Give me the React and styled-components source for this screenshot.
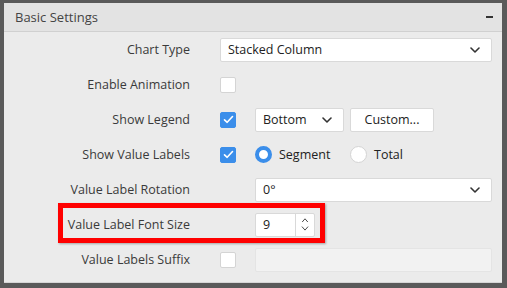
import React from 'react';
import styled, { createGlobalStyle } from 'styled-components';

const GlobalStyle = createGlobalStyle`
  html, body {
    margin: 0;
    padding: 0;
    background: #5a5a5a;
  }
  body {
    font-family: "Open Sans", "Noto Sans", sans-serif;
  }
`;

const Frame = styled.div`
  width: 507px;
  height: 288px;
  box-sizing: border-box;
  padding: 3px 5px 5px 4px;
  background: #5a5a5a;
`;

const Panel = styled.div`
  height: 100%;
  background: #ebebeb;
  display: flex;
  flex-direction: column;
  overflow: hidden;
`;

const Header = styled.div`
  height: 28px;
  flex: none;
  display: flex;
  align-items: center;
  justify-content: space-between;
  padding: 0 9px 0 11px;
  background: #e3e3e3;
  border-bottom: 1px solid #d0d0d0;
  color: #444;
  font-size: 13px;
`;

const Minus = styled.span`
  width: 7px;
  height: 2px;
  background: #333;
`;

const Body = styled.div`
  flex: 1;
  display: flex;
  flex-direction: column;
  border-bottom: 1px solid #d6d6d6;
`;

const Row = styled.div`
  height: 35px;
  flex: none;
  display: grid;
  grid-template-columns: 216px 35px 1fr;
  align-items: center;
  padding-right: 10px;
  position: relative;
`;

const Label = styled.div`
  text-align: right;
  padding-right: 30px;
  font-size: 12.5px;
  color: #3a3a3a;
  white-space: nowrap;
`;

const Controls = styled.div`
  grid-column: ${p => (p.$wide ? '2 / 4' : '3')};
  display: flex;
  align-items: center;
  gap: 6px;
`;

const Box = styled.span`
  width: 16px;
  height: 16px;
  box-sizing: border-box;
  border-radius: 2px;
  background: ${p => (p.$checked ? '#3b8eea' : '#fff')};
  border: 1px solid ${p => (p.$checked ? '#3b8eea' : '#d4d4d4')};
  display: flex;
  align-items: center;
  justify-content: center;
`;

const Select = styled.div`
  height: 24px;
  width: ${p => p.$width || 'auto'};
  flex: ${p => (p.$width ? 'none' : '1')};
  box-sizing: border-box;
  background: #fff;
  border: 1px solid #d9d9d9;
  border-radius: 2px;
  display: flex;
  align-items: center;
  justify-content: space-between;
  padding: 0 11px 0 7px;
  font-size: 12.5px;
  color: #222;
`;

const Button = styled.div`
  height: 24px;
  width: 84px;
  box-sizing: border-box;
  background: #fff;
  border: 1px solid #d9d9d9;
  border-radius: 2px;
  display: flex;
  align-items: center;
  justify-content: center;
  font-size: 12.5px;
  color: #222;
`;

const RadioItem = styled.label`
  display: flex;
  align-items: center;
  gap: 7px;
  font-size: 12.5px;
  color: #222;
  width: ${p => p.$width || 'auto'};
`;

const Radio = styled.span`
  width: 17px;
  height: 17px;
  box-sizing: border-box;
  border-radius: 50%;
  background: #fff;
  border: ${p => (p.$checked ? '4px solid #3b8eea' : '1px solid #d4d4d4')};
`;

const Highlight = styled.div`
  position: absolute;
  left: 54px;
  top: -4px;
  width: 267px;
  height: 40px;
  box-sizing: border-box;
  border: 5px solid #ff0000;
  box-shadow: 1px 1px 2px rgba(0, 0, 0, 0.3);
  pointer-events: none;
`;

const NumberBox = styled.div`
  width: 60px;
  height: 24px;
  box-sizing: border-box;
  background: #fff;
  border: 1px solid #d9d9d9;
  border-radius: 2px;
  display: flex;
  font-size: 12.5px;
  color: #222;
`;

const NumberValue = styled.span`
  flex: 1;
  display: flex;
  align-items: center;
  padding-left: 7px;
  border-right: 1px solid #d9d9d9;
`;

const Spinner = styled.span`
  width: 18px;
  display: flex;
  flex-direction: column;
  align-items: center;
  justify-content: center;
  gap: 4px;
`;

const Disabled = styled.div`
  flex: 1;
  height: 24px;
  box-sizing: border-box;
  background: #f2f2f2;
  border: 1px solid #e4e4e4;
  border-radius: 2px;
`;

const Chevron = ({ up, size = 10 }) => (
  <svg width={size} height={size * 0.6} viewBox="0 0 10 6" fill="none">
    <path
      d={up ? 'M1.5 5 L5 1 L8.5 5' : 'M1 1 L5 5 L9 1'}
      stroke="#333"
      strokeWidth={up ? 1.1 : 1.6}
      strokeLinecap="round"
      strokeLinejoin="round"
    />
  </svg>
);

const SmallDown = () => (
  <svg width="8" height="5" viewBox="0 0 10 6" fill="none">
    <path d="M1.5 1 L5 5 L8.5 1" stroke="#333" strokeWidth="1.1" strokeLinecap="round" strokeLinejoin="round" />
  </svg>
);

const Check = () => (
  <svg width="11" height="9" viewBox="0 0 11 9" fill="none">
    <path d="M1.5 4.8 L4.2 7.3 L9.5 1.5" stroke="#fff" strokeWidth="1.6" strokeLinecap="round" strokeLinejoin="round" />
  </svg>
);

export default function App() {
  return (
    <>
      <GlobalStyle />
      <Frame>
        <Panel>
          <Header>
            <span>Basic Settings</span>
            <Minus />
          </Header>
          <Body>
            <Row>
              <Label>Chart Type</Label>
              <Controls $wide>
                <Select>
                  <span>Stacked Column</span>
                  <Chevron />
                </Select>
              </Controls>
            </Row>
            <Row>
              <Label>Enable Animation</Label>
              <Box />
            </Row>
            <Row>
              <Label>Show Legend</Label>
              <Box $checked><Check /></Box>
              <Controls>
                <Select $width="89px">
                  <span>Bottom</span>
                  <Chevron />
                </Select>
                <Button>Custom...</Button>
              </Controls>
            </Row>
            <Row>
              <Label>Show Value Labels</Label>
              <Box $checked><Check /></Box>
              <Controls>
                <RadioItem $width="89px">
                  <Radio $checked />
                  Segment
                </RadioItem>
                <RadioItem>
                  <Radio />
                  Total
                </RadioItem>
              </Controls>
            </Row>
            <Row>
              <Label>Value Label Rotation</Label>
              <Controls>
                <Select>
                  <span>0°</span>
                  <Chevron />
                </Select>
              </Controls>
            </Row>
            <Row>
              <Highlight />
              <Label>Value Label Font Size</Label>
              <Controls>
                <NumberBox>
                  <NumberValue>9</NumberValue>
                  <Spinner>
                    <Chevron up size={8} />
                    <SmallDown />
                  </Spinner>
                </NumberBox>
              </Controls>
            </Row>
            <Row>
              <Label>Value Labels Suffix</Label>
              <Box />
              <Controls>
                <Disabled />
              </Controls>
            </Row>
          </Body>
        </Panel>
      </Frame>
    </>
  );
}
